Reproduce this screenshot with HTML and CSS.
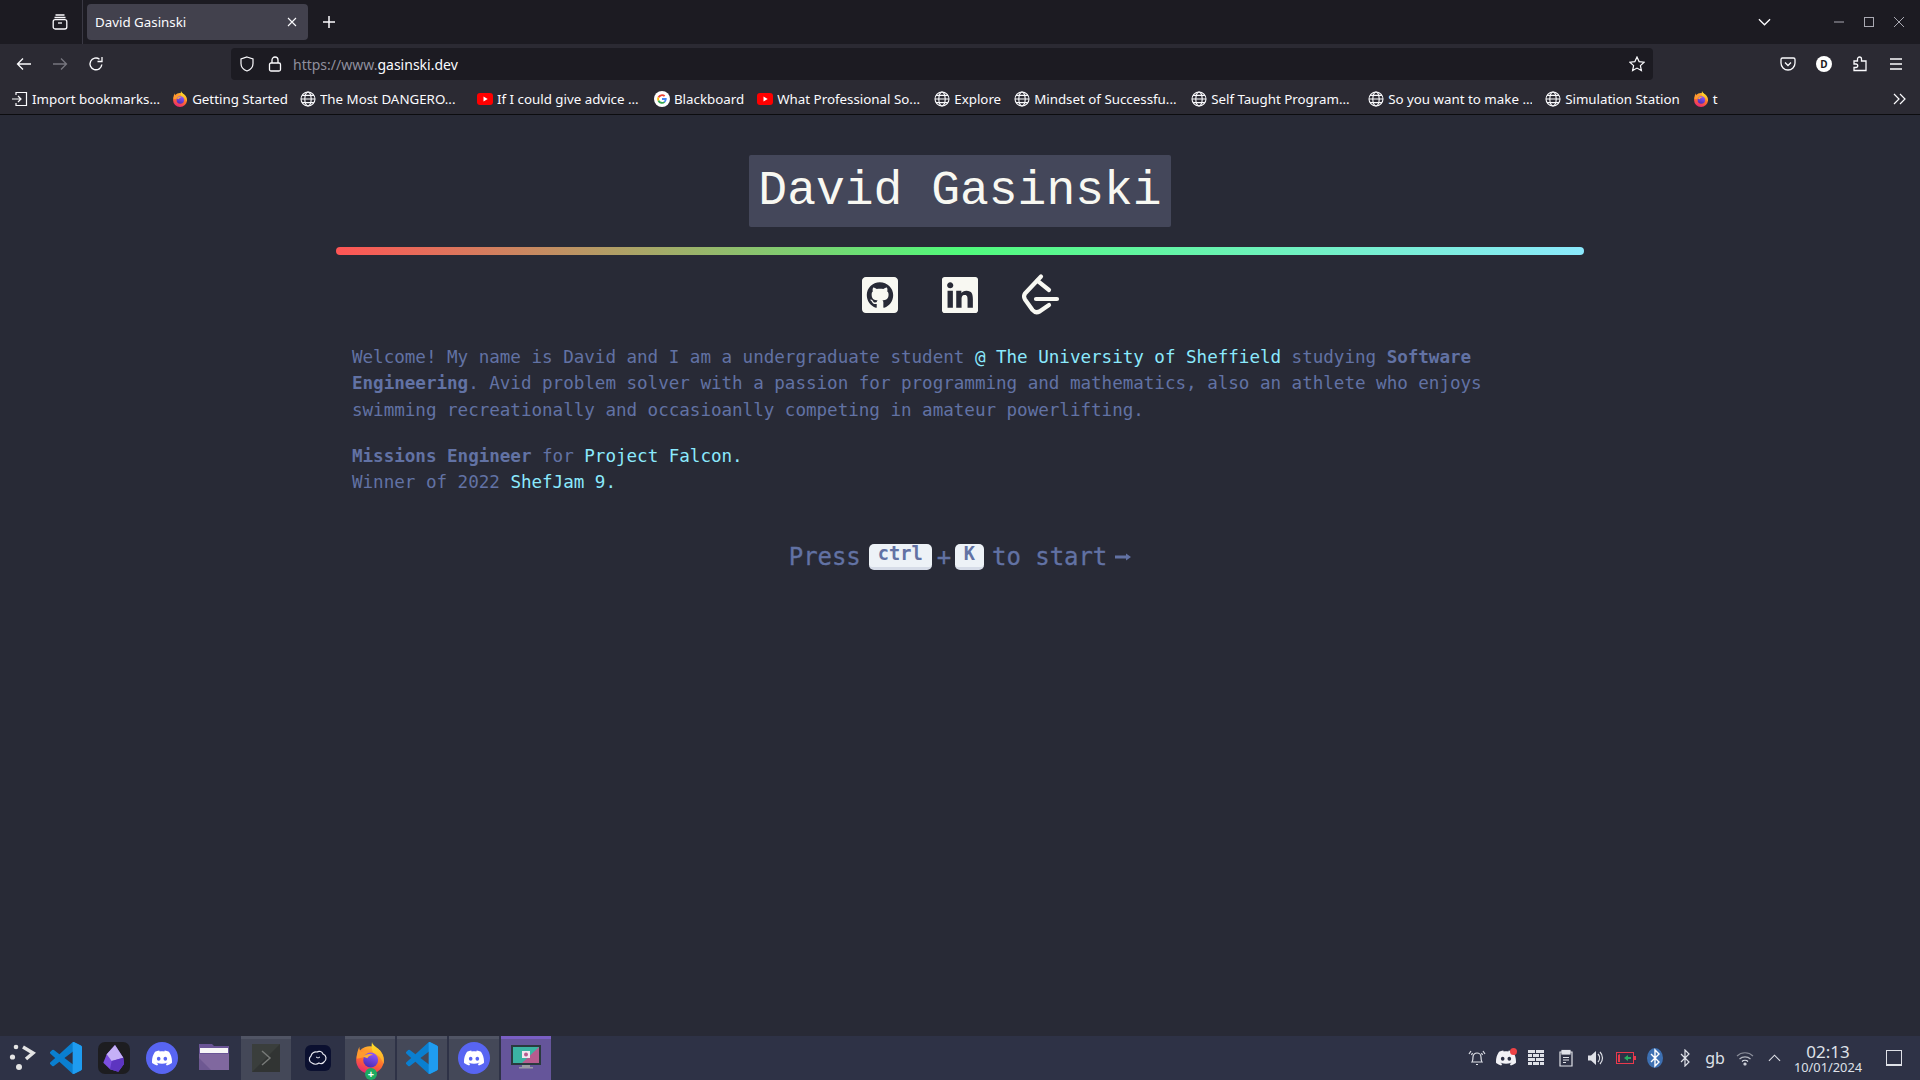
FILE: index.html
```html
<!DOCTYPE html>
<html lang="en">
<head>
    <meta charset="UTF-8">
    <meta name="viewport" content="width=device-width, initial-scale=1.0">
    <title>David Gasinski</title>
    <link rel="stylesheet" href="styles.css">
</head>
<body>
    <svg class="defs" aria-hidden="true">
        <defs>
            <linearGradient id="ffBody" x1="0.7" y1="0" x2="0.3" y2="1">
                <stop offset="0%" stop-color="#ffc22e"/>
                <stop offset="55%" stop-color="#ff6a2e"/>
                <stop offset="100%" stop-color="#e8217a"/>
            </linearGradient>
            <linearGradient id="ffFlame" x1="0" y1="0" x2="0" y2="1">
                <stop offset="0%" stop-color="#ffe226"/>
                <stop offset="100%" stop-color="#ffa52e"/>
            </linearGradient>
            <linearGradient id="ffCore" x1="0.7" y1="0" x2="0.3" y2="1">
                <stop offset="0%" stop-color="#9059ff"/>
                <stop offset="100%" stop-color="#4a2bb0"/>
            </linearGradient>
            <clipPath id="vsRight"><rect x="17" y="0" width="7" height="24"/></clipPath>
            <symbol id="i-globe" viewBox="0 0 16 16">
                <g fill="none" stroke="#fbfbfe" stroke-width="1.1">
                    <circle cx="8" cy="8" r="7"/>
                    <ellipse cx="8" cy="8" rx="3.2" ry="7"/>
                    <path d="M1 8h14M2 4.4h12M2 11.6h12"/>
                </g>
            </symbol>
            <symbol id="i-firefox" viewBox="0 0 24 24">
                <circle cx="12" cy="13.5" r="10.4" fill="url(#ffBody)"/>
                <path d="M13.500 0c.5 3 4.500 4 7 8 1.800 2.800 2.200 5.500 1.700 8.500C20.500 12 18 9.500 14.500 8.500 13 5.500 13 3 13.500 0z" fill="url(#ffFlame)"/>
                <path d="M4 3.500c0 2 .5 3 1.500 4C8 6 11.500 6.500 14 9c-3-.8-5.500.2-6.500 2.500L2 12.500c0-3.500.8-6.500 2-9z" fill="#ff9a2e"/>
                <circle cx="12.500" cy="13.500" r="5.600" fill="url(#ffCore)"/>
                <path d="M7 11c2-2 5-2.500 7.500-1.200-2.500 0-4 1-4.500 2.400z" fill="#ffb02e"/>
            </symbol>
            <symbol id="i-youtube" viewBox="0 0 16 16">
                <rect x="0" y="2" width="16" height="12" rx="3" fill="#f00"/>
                <path d="M6.500 5.500v5l4.200-2.500z" fill="#fff"/>
            </symbol>
            <symbol id="i-discord" viewBox="0 0 24 24">
                <path fill="currentColor" d="M20.317 4.3698a19.7913 19.7913 0 00-4.8851-1.5152.0741.0741 0 00-.0785.0371c-.211.3753-.4447.8648-.6083 1.2495-1.8447-.2762-3.68-.2762-5.4868 0-.1636-.3933-.4058-.8742-.6177-1.2495a.077.077 0 00-.0785-.037 19.7363 19.7363 0 00-4.8852 1.515.0699.0699 0 00-.0321.0277C.5334 9.0458-.319 13.5799.0992 18.0578a.0824.0824 0 00.0312.0561c2.0528 1.5076 4.0413 2.4228 5.9929 3.0294a.0777.0777 0 00.0842-.0276c.4616-.6304.8731-1.2952 1.226-1.9942a.076.076 0 00-.0416-.1057c-.6528-.2476-1.2743-.5495-1.8722-.8923a.077.077 0 01-.0076-.1277c.1258-.0943.2517-.1923.3718-.2914a.0743.0743 0 01.0776-.0105c3.9278 1.7933 8.18 1.7933 12.0614 0a.0739.0739 0 01.0785.0095c.1202.099.246.1981.3728.2924a.077.077 0 01-.0066.1276 12.2986 12.2986 0 01-1.873.8914.0766.0766 0 00-.0407.1067c.3604.698.7719 1.3628 1.225 1.9932a.076.076 0 00.0842.0286c1.961-.6067 3.9495-1.5219 6.0023-3.0294a.077.077 0 00.0313-.0552c.5004-5.177-.8382-9.6739-3.5485-13.6604a.061.061 0 00-.0312-.0286zM8.02 15.3312c-1.1825 0-2.1569-1.0857-2.1569-2.419 0-1.3332.9555-2.4189 2.157-2.4189 1.2108 0 2.1757 1.0952 2.1568 2.419 0 1.3332-.9555 2.4189-2.1569 2.4189zm7.9748 0c-1.1825 0-2.1569-1.0857-2.1569-2.419 0-1.3332.9554-2.4189 2.1569-2.4189 1.2108 0 2.1757 1.0952 2.1568 2.419 0 1.3332-.946 2.4189-2.1568 2.4189Z"/>
            </symbol>
            <symbol id="i-discord-round" viewBox="0 0 32 32">
                <circle cx="16" cy="16" r="16" fill="#5865f2"/>
                <use href="#i-discord" x="6" y="6" width="20" height="20" color="#fff"/>
            </symbol>
            <symbol id="i-vscode" viewBox="0 0 24 24">
                <path fill="#0a7fd0" d="M23.15 2.587L18.21.21a1.494 1.494 0 0 0-1.705.29l-9.46 8.63-4.12-3.128a.999.999 0 0 0-1.276.057L.327 7.261A1 1 0 0 0 .326 8.74L3.899 12 .326 15.26a1 1 0 0 0 .001 1.479L1.65 17.940a.999.999 0 0 0 1.276.057l4.12-3.128 9.46 8.63a1.492 1.492 0 0 0 1.704.29l4.942-2.377A1.5 1.5 0 0 0 24 20.060V3.939a1.5 1.5 0 0 0-.85-1.352zm-5.146 14.861L10.826 12l7.178-5.448v10.896z"/>
                <path fill="#1f9cf0" clip-path="url(#vsRight)" d="M23.15 2.587L18.21.21a1.494 1.494 0 0 0-1.705.29L16.500 24l1.710-.21 4.942-2.377A1.5 1.5 0 0 0 24 20.060V3.939a1.5 1.5 0 0 0-.85-1.352zm-5.146 14.861V6.552z"/>
            </symbol>
        </defs>
    </svg>

    <header class="chrome">
        <div class="tabbar">
            <div class="tab-tools">
                <svg class="icon" viewBox="0 0 16 16" fill="none" stroke="#fbfbfe" stroke-width="1.300"><path d="M3.500 1h9M2.500 3.500h11"/><rect x="1.200" y="5.600" width="13.600" height="9.400" rx="2"/><path d="M6 9h4"/></svg>
            </div>
            <div class="tab">
                <span class="tab-title">David Gasinski</span>
                <svg class="tab-close" viewBox="0 0 10 10" fill="none" stroke="#fbfbfe" stroke-width="1.100"><path d="M1 1l8 8M9 1l-8 8"/></svg>
            </div>
            <svg class="new-tab" viewBox="0 0 14 14" fill="none" stroke="#fbfbfe" stroke-width="1.500"><path d="M7 1v12M1 7h12"/></svg>
            <svg class="tab-list" viewBox="0 0 14 8" fill="none" stroke="#fbfbfe" stroke-width="1.400"><path d="M1 1l6 6 6-6"/></svg>
            <div class="win-controls">
                <svg viewBox="0 0 12 12" fill="none" stroke="#a9a9b2"><path d="M1 6h10"/></svg>
                <svg viewBox="0 0 12 12" fill="none" stroke="#a9a9b2"><rect x="1.500" y="1.500" width="9" height="9"/></svg>
                <svg viewBox="0 0 12 12" fill="none" stroke="#a9a9b2"><path d="M1 1l10 10M11 1L1 11"/></svg>
            </div>
        </div>

        <div class="toolbar">
            <div class="tool">
                <svg class="icon" viewBox="0 0 16 16" fill="none" stroke="#fbfbfe" stroke-width="1.300"><path d="M15 8H1.500M7 2.500L1.500 8 7 13.500"/></svg>
            </div>
            <div class="tool">
                <svg class="icon" viewBox="0 0 16 16" fill="none" stroke="#77767f" stroke-width="1.300"><path d="M1 8h13.500M9 2.500L14.500 8 9 13.500"/></svg>
            </div>
            <div class="tool">
                <svg class="icon" viewBox="0 0 16 16" fill="none" stroke="#fbfbfe" stroke-width="1.400"><path d="M13.800 8.500A5.900 5.900 0 1 1 11.500 3.200"/><path d="M14 1v4.500H9.500" stroke-width="1.300"/></svg>
            </div>
            <div class="urlbar">
                <svg class="icon" viewBox="0 0 16 16" fill="none" stroke="#fbfbfe" stroke-width="1.200"><path d="M8 1l6 2v4.500C14 11.500 11 14 8 15 5 14 2 11.500 2 7.500V3z"/></svg>
                <svg class="icon lock" viewBox="0 0 16 16" fill="none" stroke="#fbfbfe" stroke-width="1.300"><rect x="2.500" y="7" width="11" height="8" rx="1.500"/><path d="M5 7V4a3 3 0 0 1 6 0v3"/></svg>
                <span class="url"><span class="url-dim">https://www.</span>gasinski.dev</span>
                <svg class="icon star" viewBox="0 0 16 16" fill="none" stroke="#fbfbfe" stroke-width="1.200"><path d="M8 1l2.100 4.600 5 .6-3.700 3.400 1 5L8 12.100 3.600 14.600l1-5L.9 6.200l5-.6z"/></svg>
            </div>
            <div class="tool-right">
                <div class="tool">
                    <svg class="icon" viewBox="0 0 16 16" fill="none" stroke="#fbfbfe" stroke-width="1.300"><path d="M2.500 2h11A1.500 1.500 0 0 1 15 3.500V7A7 7 0 0 1 1 7V3.500A1.500 1.500 0 0 1 2.500 2z"/><path d="M5 6.500l3 3 3-3"/></svg>
                </div>
                <div class="tool"><span class="avatar">D</span></div>
                <div class="tool">
                    <svg class="icon" viewBox="0 0 16 16" fill="none" stroke="#fbfbfe" stroke-width="1.300"><path d="M2 5h3.500V3a2 2 0 0 1 4 0v2H14v9.500H2v-3h2a1.700 1.700 0 0 0 0-3.500H2z"/></svg>
                </div>
                <div class="tool">
                    <svg class="icon" viewBox="0 0 16 16" fill="none" stroke="#fbfbfe" stroke-width="1.400"><path d="M2 3h12M2 8h12M2 13h12"/></svg>
                </div>
            </div>
        </div>

        <div class="bookmarks">
            <a class="bm bm-tight"><svg class="icon" viewBox="0 0 16 16" fill="none" stroke="#fbfbfe" stroke-width="1.200"><path d="M0 8h9M6 5l3 3-3 3M4 4V1.500h10.500v13H4V12"/></svg><span>Import bookmarks...</span></a>
            <a class="bm bm-tight"><svg class="icon"><use href="#i-firefox"/></svg><span>Getting Started</span></a>
            <a class="bm"><svg class="icon"><use href="#i-globe"/></svg><span class="bm-long">The Most DANGERO...</span></a>
            <a class="bm"><svg class="icon"><use href="#i-youtube"/></svg><span class="bm-long">If I could give advice ...</span></a>
            <a class="bm">
                <svg class="icon" viewBox="0 0 16 16">
                    <circle cx="8" cy="8" r="8" fill="#fff"/>
                    <path d="M8 3.200a4.800 4.800 0 0 1 3.300 1.300L10 5.800A3 3 0 0 0 5.200 7L3.700 5.800A4.800 4.800 0 0 1 8 3.200z" fill="#ea4335"/>
                    <path d="M3.700 5.800L5.200 7a3 3 0 0 0 0 2l-1.500 1.200a4.800 4.800 0 0 1 0-4.400z" fill="#fbbc05"/>
                    <path d="M3.700 10.200L5.200 9a3 3 0 0 0 4.600 1.400l1.400 1.200A4.800 4.800 0 0 1 3.700 10.200z" fill="#34a853"/>
                    <path d="M12.700 7.100H8v1.900h2.700a2.300 2.300 0 0 1-.9 1.400l1.400 1.200a4.800 4.800 0 0 0 1.500-4.500z" fill="#4285f4"/>
                </svg><span>Blackboard</span>
            </a>
            <a class="bm"><svg class="icon"><use href="#i-youtube"/></svg><span class="bm-long">What Professional So...</span></a>
            <a class="bm"><svg class="icon"><use href="#i-globe"/></svg><span>Explore</span></a>
            <a class="bm"><svg class="icon"><use href="#i-globe"/></svg><span class="bm-long">Mindset of Successfu...</span></a>
            <a class="bm"><svg class="icon"><use href="#i-globe"/></svg><span class="bm-long">Self Taught Program...</span></a>
            <a class="bm"><svg class="icon"><use href="#i-globe"/></svg><span class="bm-long">So you want to make ...</span></a>
            <a class="bm"><svg class="icon"><use href="#i-globe"/></svg><span>Simulation Station</span></a>
            <a class="bm"><svg class="icon"><use href="#i-firefox"/></svg><span>t</span></a>
            <svg class="bm-more" viewBox="0 0 14 12" fill="none" stroke="#fbfbfe" stroke-width="1.200"><path d="M1 1l5 5-5 5M7 1l5 5-5 5"/></svg>
        </div>
    </header>

    <main class="page">
        <div class="content">
            <h1 class="name">David Gasinski</h1>
            <div class="rainbow"></div>
            <div class="socials">
                <svg class="social" viewBox="0 32 448 448"><path fill="#f8f8f2" d="M400 32H48C21.5 32 0 53.500 0 80v352c0 26.500 21.500 48 48 48h352c26.500 0 48-21.500 48-48V80c0-26.500-21.500-48-48-48zM277.300 415.700c-8.400 1.500-11.500-3.700-11.500-8 0-5.400.2-33 .2-55.300 0-15.600-5.200-25.500-11.300-30.700 37-4.100 76-9.200 76-73.100 0-18.200-6.500-27.300-17.100-39 1.700-4.300 7.400-22-1.700-45-13.900-4.300-45.700 17.900-45.700 17.900-13.200-3.700-27.500-5.600-41.600-5.600-14.100 0-28.400 1.900-41.600 5.600 0 0-31.800-22.200-45.700-17.900-9.100 22.900-3.500 40.600-1.700 45-10.600 11.700-15.600 20.800-15.600 39 0 63.600 37.300 69 74.300 73.100-4.800 4.300-9.100 11.700-10.600 22.300-9.500 4.300-33.800 11.700-48.300-13.900-9.100-15.800-25.500-17.100-25.500-17.100-16.200-.2-1.100 10.200-1.100 10.200 10.800 5 18.400 24.200 18.400 24.200 9.700 29.700 56.100 19.700 56.100 19.700 0 13.900.2 36.500.2 40.600 0 4.300-3 9.500-11.500 8-66-22.100-112.200-84.900-112.200-158.300 0-91.800 70.200-161.500 162-161.500S388 165.600 388 257.400c.1 73.400-44.700 136.300-110.700 158.300z"/></svg>
                <svg class="social" viewBox="0 32 448 448"><path fill="#f8f8f2" d="M416 32H31.900C14.300 32 0 46.500 0 64.300v383.400C0 465.500 14.300 480 31.900 480H416c17.600 0 32-14.500 32-32.300V64.300c0-17.800-14.400-32.300-32-32.300zM135.400 416H69V202.200h66.500V416zm-33.200-243c-21.300 0-38.500-17.300-38.500-38.500S80.900 96 102.200 96c21.200 0 38.500 17.300 38.500 38.500 0 21.300-17.200 38.500-38.500 38.500zm282.100 243h-66.400V312c0-24.800-.5-56.700-34.500-56.700-34.600 0-39.900 27-39.900 54.900V416h-66.400V202.200h63.700v29.200h.9c8.900-16.800 30.600-28.800 62.900-28.800 67.200 0 79.700 44.300 79.700 101.900V416z"/></svg>
                <svg class="social" viewBox="1 2 36 36" fill="none" stroke="#f8f8f2" stroke-width="4.200" stroke-linecap="round" stroke-linejoin="round"><path d="M20 1.500L4 18.500q-2 3 0 6l7.500 10.500q3 3.500 7 1.500l9.500-6.500"/><path d="M16.300 5.700L28 15M15 24h21"/></svg>
            </div>
            <div class="intro">
                <p>Welcome! My name is David and I am a undergraduate student <a>@ The University of Sheffield</a> studying <strong>Software</strong> <strong>Engineering</strong>. Avid problem solver with a passion for programming and mathematics, also an athlete who enjoys <span>swimming recreationally and occasioanlly competing in amateur powerlifting.</span></p>
                <p><strong>Missions Engineer</strong> for <a>Project Falcon.</a><br>Winner of 2022 <a>ShefJam 9.</a></p>
            </div>
            <div class="press">
                <span>Press</span>
                <kbd>ctrl</kbd>
                <span class="plus">+</span>
                <kbd>K</kbd>
                <span>to start</span>
                <svg class="press-arrow" viewBox="0 0 16 10" fill="#6272a4"><path d="M0 3.500h11V1.500L16 5l-5 3.500v-2H0z"/></svg>
            </div>
        </div>
    </main>

    <footer class="taskbar">
        <div class="launcher">
            <svg class="kickoff" viewBox="0 0 32 32" fill="#e4e4e4"><circle cx="11" cy="5" r="2.300"/><circle cx="7.500" cy="15" r="2.600"/><circle cx="14" cy="25" r="3"/><path d="M18 5l10 6-7 6" fill="none" stroke="#e4e4e4" stroke-width="3.500"/></svg>
        </div>
        <div class="pin"><svg class="app"><use href="#i-vscode"/></svg></div>
        <div class="pin">
            <svg class="app" viewBox="0 0 32 32">
                <rect width="32" height="32" rx="7" fill="#1d1d20"/>
                <path d="M17 3l8.300 12.700L26 22l-5.700 7.700L12 27.300 5.300 20.700l3.400-8.400z" fill="#7c4fe0"/>
                <path d="M17 3l8.300 12.700L13.700 19 8.700 12.300z" fill="#c5b0f7"/>
                <path d="M13.700 19l11.600-3.300L26 22l-5.700 7.700L12 27.300z" fill="#5d35c0"/>
            </svg>
        </div>
        <div class="pin"><svg class="app"><use href="#i-discord-round"/></svg></div>
        <div class="pin pin-wide">
            <svg class="app" viewBox="0 0 32 32">
                <path d="M1 2h13l2 2h15v24H1z" fill="#6a5596"/>
                <rect x="2" y="6" width="28" height="5" fill="#f7f7f7"/>
                <path d="M1 12h30v16H1z" fill="#80689f"/>
                <path d="M1 16l12 12H1z" fill="#6e5892"/>
            </svg>
        </div>
        <div class="task">
            <svg class="app" viewBox="0 0 32 32">
                <rect x="2" y="2" width="28" height="28" fill="#3a3e3c"/>
                <path d="M2 30L30 2v28z" fill="#313433"/>
                <path d="M12 9l8 7-8 7" fill="none" stroke="#777a78" stroke-width="1.500"/>
            </svg>
        </div>
        <div class="task task-plain">
            <svg class="app app-sm" viewBox="0 0 26 26">
                <rect width="26" height="26" rx="6" fill="#0b1030"/>
                <path d="M7 18a4 4 0 0 1-1-7 5 5 0 0 1 6-4 4 4 0 0 1 6 2 4.500 4.500 0 0 1 1 8 4 4 0 0 1-5 1 6 6 0 0 1-7 0z" fill="none" stroke="#e8e8f0" stroke-width="1.200"/>
                <path d="M11 12l2 1 2-1" fill="none" stroke="#e8e8f0" stroke-width="1"/>
            </svg>
        </div>
        <div class="task">
            <span class="app-wrap">
                <svg class="app"><use href="#i-firefox"/></svg>
                <span class="added">+</span>
            </span>
        </div>
        <div class="task"><svg class="app"><use href="#i-vscode"/></svg></div>
        <div class="task"><svg class="app"><use href="#i-discord-round"/></svg></div>
        <div class="task task-active">
            <svg class="app" viewBox="0 0 32 32">
                <rect x="1" y="3" width="30" height="20" fill="#2a3a3e"/>
                <path d="M3 5h26v16H3z" fill="#3bb3a3"/>
                <path d="M29 5v16H12z" fill="#b65c8f"/>
                <rect x="12" y="9" width="8" height="7" fill="#f2e8f0"/>
                <circle cx="16" cy="12.500" r="2" fill="#b65c8f"/>
                <path d="M12 23h8v2h3v1.500H9V25h3z" fill="#9a9aa4"/>
            </svg>
        </div>

        <div class="tray">
            <div class="tray-item">
                <svg class="tray-icon" viewBox="0 0 18 18" fill="none" stroke="#dfe1e8" stroke-width="1.200"><path d="M4 13c1-1.500 1-3 1-5a4 4 0 0 1 8 0c0 2 0 3.500 1 5zM8 15.500h2M1 5l2-3M17 5l-2-3M3.500 6l1-2M14.500 6l-1-2"/></svg>
            </div>
            <div class="tray-item">
                <span class="discord-tray">
                    <svg class="tray-discord"><use href="#i-discord"/></svg>
                    <span class="tray-dot"></span>
                </span>
            </div>
            <div class="tray-item">
                <svg class="tray-icon" viewBox="0 0 18 18" fill="#dfe1e8"><path d="M1 1h7v3H1zM9 1h8v3H9zM1 5h4v3H1zM6 5h6v3H6zM13 5h4v3h-4zM1 9h7v3H1zM9 9h8v3H9zM1 13h4v3H1zM6 13h6v3H6zM13 13h4v3h-4z"/></svg>
            </div>
            <div class="tray-item">
                <svg class="tray-icon" viewBox="0 0 18 18" fill="none" stroke="#dfe1e8" stroke-width="1.200"><path d="M5 3H3v14h12V3h-2"/><rect x="5" y="1.500" width="8" height="3.500" fill="#dfe1e8"/><path d="M6 8.500h6M6 11h6M6 13.500h3"/></svg>
            </div>
            <div class="tray-item">
                <svg class="tray-icon" viewBox="0 0 18 18" fill="#dfe1e8"><path d="M1 6.500h3L9 2v14l-5-4.500H1z"/><path d="M11 5a6 6 0 0 1 0 8M13 3a8.500 8.500 0 0 1 0 12" fill="none" stroke="#dfe1e8" stroke-width="1.200"/></svg>
            </div>
            <div class="tray-item">
                <svg class="tray-battery" viewBox="0 0 20 12"><rect x=".5" y=".5" width="17" height="11" fill="none" stroke="#e8394c"/><path d="M18 4h2v4h-2z" fill="#e8394c"/><path d="M2 10V3l2-1v8z" fill="#e8394c"/><path d="M8 6l4-3v2h3v2h-3v2z" fill="#27ae60"/></svg>
            </div>
            <div class="tray-item">
                <svg class="tray-bt" viewBox="0 0 16 20"><ellipse cx="8" cy="10" rx="8" ry="10" fill="#3d70b2"/><path d="M4 6l8 8-4 4V2l4 4-8 8" fill="none" stroke="#fff" stroke-width="1.400"/></svg>
            </div>
            <div class="tray-item">
                <svg class="tray-icon" viewBox="0 0 18 18" fill="none" stroke="#dfe1e8" stroke-width="1.200"><path d="M5 5l8 8-4 4V1l4 4-8 8"/></svg>
            </div>
            <div class="tray-item tray-lang">gb</div>
            <div class="tray-item">
                <svg class="tray-icon" viewBox="0 0 18 18" fill="none" stroke="#8b8e9a" stroke-width="1.200"><path d="M1 7a11.500 11.500 0 0 1 16 0"/><path d="M3.500 10a8 8 0 0 1 11 0" stroke="#b5b8c2"/><path d="M6 12.500a4.200 4.200 0 0 1 6 0" stroke="#dfe1e8"/><circle cx="9" cy="15" r="1" stroke="#dfe1e8"/></svg>
            </div>
            <div class="tray-item tray-caret">
                <svg viewBox="0 0 14 8" fill="none" stroke="#dfe1e8" stroke-width="1.200"><path d="M1 7l6-6 6 6"/></svg>
            </div>
            <div class="clock">
                <span class="clock-time">02:13</span>
                <span class="clock-date">10/01/2024</span>
            </div>
            <div class="show-desktop"></div>
        </div>
    </footer>
</body>
</html>
```

FILE: styles.css
```css
* {
    box-sizing: border-box;
}
html, body {
    height: 100%;
}
body {
    margin: 0;
    display: flex;
    flex-direction: column;
    height: 100vh;
    overflow: hidden;
    background-color: #282a36;
    font-family: "Noto Sans", sans-serif;
    font-size: 13.33px;
    color: #fbfbfe;
}
.defs {
    position: absolute;
    width: 0;
    height: 0;
}
.icon {
    width: 16px;
    height: 16px;
    flex: none;
}

/* browser chrome */
.chrome {
    flex: none;
}
.tabbar {
    display: flex;
    align-items: center;
    height: 44px;
    background-color: #1c1b22;
}
.tab-tools {
    display: flex;
    align-items: center;
    width: 83px;
    height: 100%;
    padding-left: 52px;
    border-right: 1px solid #3a3944;
}
.tab {
    display: flex;
    align-items: center;
    justify-content: space-between;
    width: 221px;
    height: 36px;
    margin-left: 4px;
    padding: 0 11px 0 8px;
    background-color: #42414d;
    border-radius: 4px;
}
.tab-close {
    width: 10px;
    height: 10px;
}
.new-tab {
    width: 14px;
    height: 14px;
    margin-left: 14px;
}
.tab-list {
    width: 13px;
    height: 8px;
    margin-left: auto;
}
.win-controls {
    display: flex;
    gap: 18px;
    margin-left: 62px;
    padding-right: 15px;
}
.win-controls svg {
    width: 12px;
    height: 12px;
}

.toolbar {
    display: flex;
    align-items: center;
    height: 36px;
    padding: 4px 6px 0;
    background-color: #2b2a33;
}
.tool {
    display: flex;
    align-items: center;
    justify-content: center;
    width: 36px;
    height: 32px;
    flex: none;
}
.urlbar {
    display: flex;
    align-items: center;
    flex: none;
    width: 1422px;
    height: 32px;
    margin-left: 117px;
    padding: 0 8px;
    background-color: #1c1b22;
    border-radius: 4px;
    font-size: 14px;
}
.lock {
    margin-left: 12px;
}
.url {
    margin-left: 10px;
}
.url-dim {
    color: #8f8f9d;
}
.star {
    margin-left: auto;
}
.tool-right {
    display: flex;
    margin-left: auto;
}
.avatar {
    display: flex;
    align-items: center;
    justify-content: center;
    width: 16px;
    height: 16px;
    border-radius: 50%;
    background-color: #fff;
    color: #1c1b22;
    font-size: 10px;
    font-weight: 700;
}

.bookmarks {
    display: flex;
    align-items: center;
    gap: 13px;
    height: 35px;
    padding: 3px 12px 0;
    background-color: #2b2a33;
    border-bottom: 1px solid #0c0c0f;
}
.bm {
    display: flex;
    align-items: center;
    gap: 4px;
    white-space: nowrap;
}
.bm-tight {
    margin-right: -1px;
}
.bm-long {
    width: 144px;
    overflow: hidden;
}
.bm-more {
    width: 14px;
    height: 12px;
    margin-left: auto;
    margin-right: 1px;
}

/* the site itself */
.page {
    flex: 1;
    min-height: 0;
}
.content {
    display: flex;
    flex-direction: column;
    align-items: center;
    width: 1248px;
    margin: 0 auto;
    padding-top: 40px;
}
.name {
    margin: 0;
    padding: 0 9px;
    background-color: #44475a;
    border-radius: 2px;
    font-family: "Liberation Mono", monospace;
    font-size: 48px;
    font-weight: 400;
    line-height: 72px;
    color: #f8f8f2;
}
.rainbow {
    width: 100%;
    height: 8px;
    margin-top: 20px;
    border-radius: 4px;
    background: linear-gradient(90deg, #ff5555, #50fa7b, #8be9fd);
}
.socials {
    display: flex;
    gap: 44px;
    margin-top: 22px;
}
.social {
    display: block;
    width: 36px;
    height: 36px;
    overflow: visible;
}
.intro {
    width: 100%;
    margin-top: 31px;
    padding: 0 16px;
    font-family: "DejaVu Sans Mono", monospace;
    font-size: 17.6px;
    letter-spacing: -0.035px;
    line-height: 26.4px;
    color: #6272a4;
}
.intro p {
    margin: 0 0 19.5px;
}
.intro a {
    color: #8be9fd;
}
.intro strong {
    font-weight: 700;
}
.press {
    display: flex;
    align-items: center;
    gap: 8px;
    margin-top: 23.5px;
    font-family: "DejaVu Sans Mono", monospace;
    font-size: 24px;
    letter-spacing: -0.05px;
    line-height: 36px;
    color: #6272a4;
    -webkit-text-stroke: 0.3px #6272a4;
}
.press kbd {
    display: block;
    padding: 0 9px;
    height: 26px;
    background-color: #edf2f7;
    border-bottom: 3px solid #d6dce8;
    border-radius: 5px;
    font-family: "DejaVu Sans Mono", monospace;
    font-size: 18.7px;
    font-weight: 700;
    line-height: 20px;
    letter-spacing: 0;
    -webkit-text-stroke: 0;
}
.plus {
    width: 12px;
    margin: 0 -2px 0 -3px;
    text-align: center;
}
.press-arrow {
    width: 16px;
    height: 10px;
}

/* desktop panel */
.taskbar {
    display: flex;
    align-items: center;
    flex: none;
    height: 44px;
    background-color: #2e3246;
}
.launcher {
    display: flex;
    justify-content: center;
    width: 42px;
}
.kickoff {
    width: 32px;
    height: 32px;
}
.pin {
    display: flex;
    justify-content: center;
    width: 48px;
}
.pin-wide {
    width: 55px;
}
.app {
    display: block;
    width: 32px;
    height: 32px;
}
.app-sm {
    width: 26px;
    height: 26px;
}
.task {
    display: flex;
    align-items: center;
    justify-content: center;
    width: 50px;
    height: 44px;
    margin-right: 2px;
    padding-bottom: 3px;
    background-color: #444858;
    border-top: 3px solid #505464;
}
.task-plain {
    background: none;
    border-top-color: transparent;
}
.task-active {
    background-color: #65559a;
    border-top-color: #7a5fc4;
}
.app-wrap {
    position: relative;
    display: block;
}
.added {
    position: absolute;
    right: 9px;
    bottom: -6px;
    width: 12px;
    height: 12px;
    border-radius: 50%;
    background-color: #1daa61;
    color: #fff;
    font-size: 11px;
    font-weight: 700;
    line-height: 11px;
    text-align: center;
}
.tray {
    display: flex;
    align-items: center;
    margin-left: auto;
    height: 100%;
}
.tray-item {
    display: flex;
    align-items: center;
    justify-content: center;
    width: 29.8px;
}
.tray-icon {
    width: 18px;
    height: 18px;
}
.discord-tray {
    position: relative;
    display: block;
    width: 20px;
    height: 20px;
}
.tray-discord {
    display: block;
    width: 20px;
    height: 20px;
    color: #f2f2f6;
}
.tray-dot {
    position: absolute;
    top: 0;
    right: -1px;
    width: 7px;
    height: 7px;
    border-radius: 50%;
    background-color: #ed4245;
}
.tray-battery {
    width: 20px;
    height: 12px;
}
.tray-bt {
    width: 16px;
    height: 20px;
}
.tray-lang {
    font-size: 16px;
    color: #dfe1e8;
}
.tray-caret svg {
    width: 13px;
    height: 8px;
}
.clock {
    display: flex;
    flex-direction: column;
    align-items: center;
    width: 68px;
    margin-left: 4.5px;
    padding-top: 1px;
    color: #dfe1e8;
}
.clock-time {
    font-size: 17px;
    line-height: 16px;
}
.clock-date {
    font-size: 12.8px;
    line-height: 14px;
}
.show-desktop {
    width: 16px;
    height: 16px;
    margin: 0 18px 0 24px;
    border: 1.5px solid #dfe1e8;
    border-bottom-width: 2.5px;
}
```
